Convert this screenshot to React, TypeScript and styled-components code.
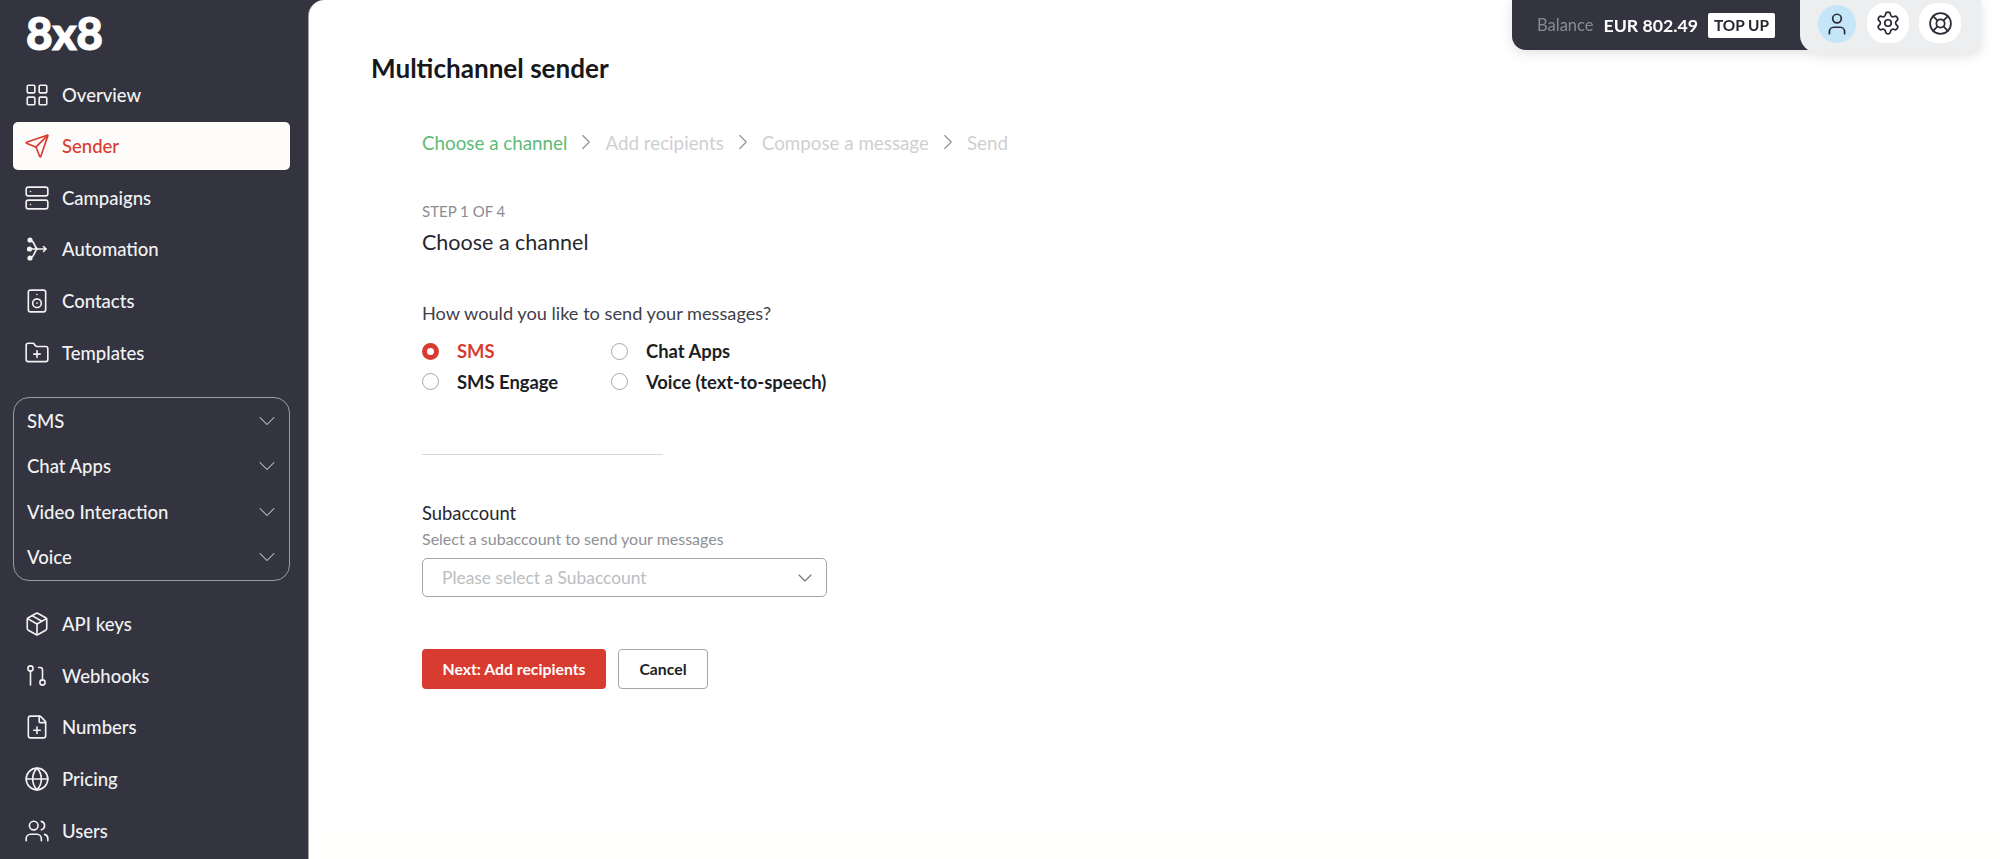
import { FC, ReactNode } from "react";
import styled, { createGlobalStyle } from "styled-components";
import {
  ChevronDown,
  ChevronRight,
  FilePlus,
  FolderPlus,
  Globe,
  LayoutGrid,
  LifeBuoy,
  Package,
  Send,
  Server,
  Settings,
  Speaker,
  User,
  Users,
} from "lucide-react";

const GlobalStyle = createGlobalStyle`
  html, body {
    margin: 0;
    height: 100%;
    overflow: hidden;
    background: #33343f;
    font-family: Lato, "Noto Sans", sans-serif;
  }
  * {
    box-sizing: border-box;
  }
`;

const Page = styled.div`
  display: flex;
  width: 100%;
  height: 100vh;
  background: #33343f;
`;

const Sidebar = styled.aside`
  flex: 0 0 308px;
  padding: 0 18px 0 13px;
  display: flex;
  flex-direction: column;
`;

const Logo = styled.div`
  flex: 0 0 70.5px;
  padding: 6px 0 0 13px;
  font-size: 46px;
  line-height: 54px;
  font-weight: 900;
  color: #fff;
  letter-spacing: -0.5px;
  -webkit-text-stroke: 1px #fff;
`;

const NavList = styled.nav`
  display: flex;
  flex-direction: column;
  gap: 3.67px;
`;

const NavItem = styled.a<{ $active?: boolean }>`
  height: 48px;
  display: flex;
  align-items: center;
  gap: 12px;
  padding-left: 11px;
  border-radius: 5px;
  font-size: 18.5px;
  font-weight: 500;
  color: ${({ $active }) => ($active ? "#d83b2f" : "#f2f2f3")};
  background: ${({ $active }) => ($active ? "#fdfcfa" : "transparent")};

  svg {
    flex: 0 0 26px;
  }
`;

const Group = styled.div`
  margin: 20.5px 0 19.3px;
  border: 1px solid #9a9ba2;
  border-radius: 16px;
`;

const GroupRow = styled.div`
  height: 45.4px;
  display: flex;
  align-items: center;
  justify-content: space-between;
  padding: 0 8px 0 13px;
  font-size: 18.5px;
  font-weight: 500;
  color: #f2f2f3;
`;

const Main = styled.main`
  flex: 1;
  position: relative;
  background: linear-gradient(#fff 825px, #fefefc 830px);
  border-left: 1px solid #a0a1a8;
  border-top-left-radius: 16px;
  padding: 52px 62px;
  color: #33343f;
`;

const Title = styled.h1`
  margin: 0;
  font-size: 26.1px;
  line-height: 32px;
  font-weight: 700;
  color: #17181c;
`;

const Flow = styled.div`
  margin-left: 51px;
`;

const Stepper = styled.ol`
  list-style: none;
  margin: 46px 0 0;
  padding: 0;
  height: 24px;
  display: flex;
  align-items: center;
  gap: 6px;
`;

const Step = styled.li<{ $current?: boolean }>`
  display: flex;
  align-items: center;
  gap: 6px;
  font-size: 18.8px;
  color: ${({ $current }) => ($current ? "#5dbb78" : "#cfcfd2")};

  svg {
    color: #8e8f95;
  }
`;

const StepCount = styled.div`
  margin-top: 47px;
  font-size: 15px;
  line-height: 20px;
  color: #8b8c92;
`;

const Heading = styled.h2`
  margin: 7px 0 0;
  font-size: 21.5px;
  line-height: 28px;
  font-weight: 400;
  color: #26272f;
`;

const Question = styled.div`
  margin-top: 46px;
  font-size: 18.2px;
  line-height: 22px;
  color: #3f4049;
`;

const Options = styled.div`
  margin-top: 15px;
  display: grid;
  grid-template-columns: 189px 1fr;
  row-gap: 6.5px;
`;

const Option = styled.label<{ $checked?: boolean }>`
  height: 24px;
  display: flex;
  align-items: center;
  gap: 18px;
  font-size: 18.4px;
  font-weight: 700;
  color: ${({ $checked }) => ($checked ? "#d83b2f" : "#1d1e24")};
`;

const RadioDot = styled.span<{ $checked?: boolean }>`
  flex: 0 0 17px;
  width: 17px;
  height: 17px;
  border-radius: 50%;
  background: #fff;
  border: ${({ $checked }) => ($checked ? "5px solid #d83b2f" : "1px solid #a5a6ab")};
`;

const Divider = styled.hr`
  width: 241px;
  height: 1px;
  margin: 60.5px 0 0;
  border: 0;
  background: #d8d8da;
`;

const FieldLabel = styled.div`
  margin-top: 47px;
  font-size: 18.4px;
  line-height: 22px;
  color: #26272f;
`;

const FieldHelp = styled.div`
  margin-top: 5px;
  font-size: 16px;
  line-height: 20px;
  color: #8f9096;
`;

const Select = styled.div`
  width: 405px;
  height: 39px;
  margin-top: 9px;
  padding: 0 9px 0 19px;
  display: flex;
  align-items: center;
  justify-content: space-between;
  border: 1px solid #a5a6ab;
  border-radius: 5px;
  font-size: 17.4px;
  color: #bcbdc1;

  svg {
    color: #6f7077;
  }
`;

const Actions = styled.div`
  margin-top: 52px;
  display: flex;
  gap: 12px;
`;

const PrimaryButton = styled.button`
  width: 184px;
  height: 40px;
  padding: 0 0 2px;
  border: 0;
  border-radius: 4px;
  background: #d83b2f;
  color: #fff;
  font: 700 15.8px Lato, sans-serif;
`;

const CancelButton = styled.button`
  width: 90px;
  height: 40px;
  padding: 0 0 2px;
  border: 1px solid #a5a6ab;
  border-radius: 4px;
  background: #fff;
  color: #1d1e24;
  font: 700 15.8px Lato, sans-serif;
`;

const TopBar = styled.div`
  position: absolute;
  top: 0;
  right: 19px;
  display: flex;
  align-items: flex-start;
  filter: drop-shadow(0 3px 6px rgba(40, 42, 55, 0.14));
`;

const BalancePanel = styled.div`
  width: 300px;
  height: 50px;
  margin-right: -12px;
  padding: 0 25px;
  display: flex;
  align-items: center;
  background: #33343f;
  border-bottom-left-radius: 14px;
`;

const BalanceLabel = styled.span`
  font-size: 16.5px;
  color: #8a8b92;
`;

const BalanceValue = styled.span`
  margin-left: 10px;
  font-size: 17.7px;
  font-weight: 700;
  color: #fff;
`;

const TopUp = styled.span`
  margin-left: 10px;
  height: 25px;
  padding: 0 6px;
  display: flex;
  align-items: center;
  background: #fff;
  border-radius: 2px;
  font-size: 15.4px;
  font-weight: 700;
  color: #26272f;
`;

const IconPanel = styled.div`
  position: relative;
  width: 181px;
  height: 53px;
  padding: 3px 20px 0 18px;
  display: flex;
  align-items: flex-start;
  gap: 10.5px;
  background: #eceef0;
  border-radius: 0 0 12px 18px;
`;

const IconButton = styled.div<{ $active?: boolean }>`
  width: ${({ $active }) => ($active ? "38px" : "42px")};
  height: ${({ $active }) => ($active ? "38px" : "40px")};
  margin-top: ${({ $active }) => ($active ? "2px" : "0")};
  display: flex;
  align-items: center;
  justify-content: center;
  border-radius: ${({ $active }) => ($active ? "50%" : "18px")};
  background: ${({ $active }) => ($active ? "#c5e5f9" : "#fff")};
  color: #2b2c35;
`;

const AutomationIcon: FC = () => (
  <svg width="26" height="26" viewBox="-2 -2 26 26" fill="none" stroke="currentColor" strokeWidth="1.6" strokeLinecap="round">
    <circle cx="4" cy="2" r="1.8" fill="currentColor" />
    <circle cx="3.5" cy="11" r="1.8" fill="currentColor" />
    <circle cx="4" cy="20" r="1.8" fill="currentColor" />
    <path d="M5 2.5c4 1 3.5 8.5 7 8.5M5 19.5c4-1 3.5-8.5 7-8.5M5 11h15M17.500 8.500l2.500 2.500-2.500 2.500" />
  </svg>
);

const WebhookIcon: FC = () => (
  <svg width="26" height="26" viewBox="-2 -2 26 26" fill="none" stroke="currentColor" strokeWidth="1.6" strokeLinecap="round">
    <circle cx="4.500" cy="3.500" r="2.600" />
    <path d="M4.500 6.100V20" />
    <circle cx="16.500" cy="17.500" r="2.600" />
    <path d="M16.500 14.900V5c0-1.500-1-2.500-2.500-2.500h-1.500" />
  </svg>
);

const navTop: { label: string; icon: ReactNode; active?: boolean }[] = [
  { label: "Overview", icon: <LayoutGrid size={26} strokeWidth={1.5} /> },
  { label: "Sender", icon: <Send size={26} strokeWidth={1.5} />, active: true },
  { label: "Campaigns", icon: <Server size={26} strokeWidth={1.5} /> },
  { label: "Automation", icon: <AutomationIcon /> },
  { label: "Contacts", icon: <Speaker size={26} strokeWidth={1.5} /> },
  { label: "Templates", icon: <FolderPlus size={26} strokeWidth={1.5} /> },
];

const navBottom: { label: string; icon: ReactNode }[] = [
  { label: "API keys", icon: <Package size={26} strokeWidth={1.5} /> },
  { label: "Webhooks", icon: <WebhookIcon /> },
  { label: "Numbers", icon: <FilePlus size={26} strokeWidth={1.5} /> },
  { label: "Pricing", icon: <Globe size={26} strokeWidth={1.5} /> },
  { label: "Users", icon: <Users size={26} strokeWidth={1.5} /> },
];

const groups = ["SMS", "Chat Apps", "Video Interaction", "Voice"];
const steps = ["Choose a channel", "Add recipients", "Compose a message", "Send"];
const options = [
  { label: "SMS", checked: true },
  { label: "Chat Apps" },
  { label: "SMS Engage" },
  { label: "Voice (text-to-speech)" },
];

const App: FC = () => {
  return (
    <Page>
      <GlobalStyle />
      <Sidebar>
        <Logo>8x8</Logo>
        <NavList>
          {navTop.map((item) => (
            <NavItem key={item.label} $active={item.active}>
              {item.icon}
              {item.label}
            </NavItem>
          ))}
        </NavList>
        <Group>
          {groups.map((g) => (
            <GroupRow key={g}>
              {g}
              <ChevronDown size={28} strokeWidth={0.9} color="#c9cacd" />
            </GroupRow>
          ))}
        </Group>
        <NavList>
          {navBottom.map((item) => (
            <NavItem key={item.label}>
              {item.icon}
              {item.label}
            </NavItem>
          ))}
        </NavList>
      </Sidebar>
      <Main>
        <TopBar>
          <BalancePanel>
            <BalanceLabel>Balance</BalanceLabel>
            <BalanceValue>EUR 802.49</BalanceValue>
            <TopUp>TOP UP</TopUp>
          </BalancePanel>
          <IconPanel>
            <IconButton $active>
              <User size={26} strokeWidth={1.6} />
            </IconButton>
            <IconButton>
              <Settings size={26} strokeWidth={1.6} />
            </IconButton>
            <IconButton>
              <LifeBuoy size={25} strokeWidth={1.7} />
            </IconButton>
          </IconPanel>
        </TopBar>
        <Title>Multichannel sender</Title>
        <Flow>
          <Stepper>
            {steps.map((s, i) => (
              <Step key={s} $current={i === 0}>
                {s}
                {i < steps.length - 1 && <ChevronRight size={26} strokeWidth={1} />}
              </Step>
            ))}
          </Stepper>
          <StepCount>STEP 1 OF 4</StepCount>
          <Heading>Choose a channel</Heading>
          <Question>How would you like to send your messages?</Question>
          <Options>
            {options.map((o) => (
              <Option key={o.label} $checked={o.checked}>
                <RadioDot $checked={o.checked} />
                {o.label}
              </Option>
            ))}
          </Options>
          <Divider />
          <FieldLabel>Subaccount</FieldLabel>
          <FieldHelp>Select a subaccount to send your messages</FieldHelp>
          <Select>
            Please select a Subaccount
            <ChevronDown size={24} strokeWidth={1.1} />
          </Select>
          <Actions>
            <PrimaryButton>Next: Add recipients</PrimaryButton>
            <CancelButton>Cancel</CancelButton>
          </Actions>
        </Flow>
      </Main>
    </Page>
  );
};

export default App;
